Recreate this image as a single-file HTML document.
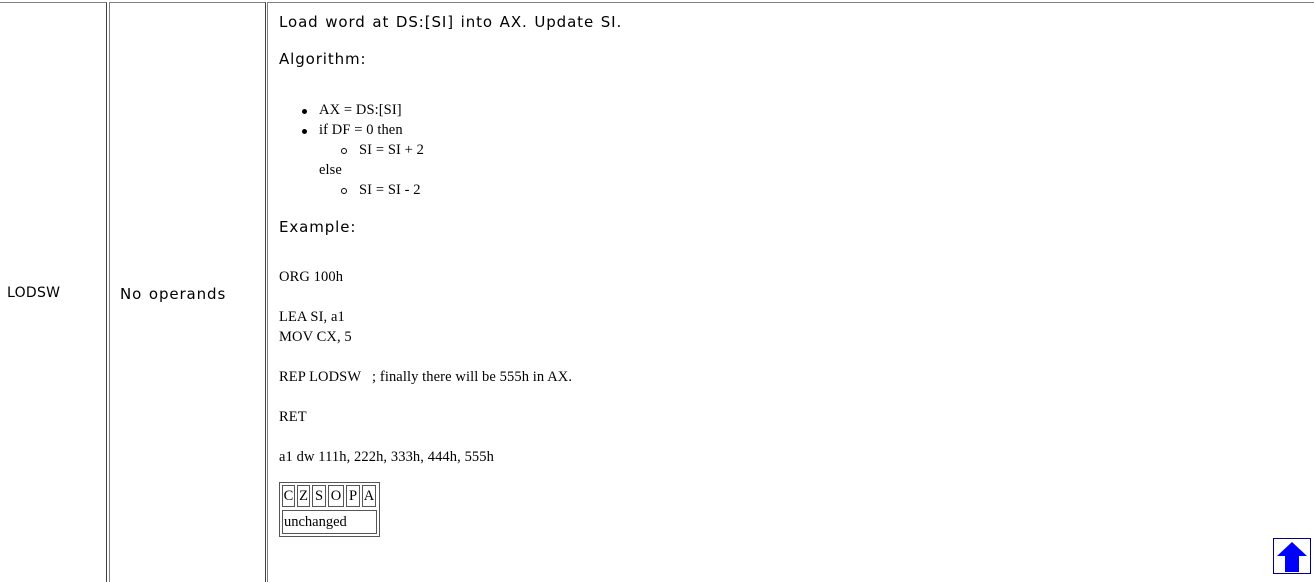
<!DOCTYPE html>
<html><head><meta charset="utf-8"><style>
body{margin:0;width:1314px;height:574px;overflow:hidden;background:#fff;position:relative;font-family:"Liberation Serif",serif;font-size:14.5px;color:#000}
.c{position:absolute;top:2px;height:580px;border-left:1px solid #808080;border-top:1px solid #808080;border-right:1px solid #404040;box-sizing:border-box}
.s{font-family:"DejaVu Sans","Liberation Sans",sans-serif;font-size:15px;position:absolute;white-space:nowrap;letter-spacing:0.9px;word-spacing:1px}
.t{position:absolute;white-space:nowrap;font-size:14.5px;letter-spacing:0.1px}
.b{position:absolute;width:5px;height:5px;border-radius:50%;background:#000}
.o{position:absolute;width:4px;height:4px;border-radius:50%;border:1px solid #000}
</style></head><body>
<div class="c" style="left:-2px;width:109px;border-left:none"></div>
<div class="c" style="left:109px;width:157px"></div>
<div class="c" style="left:267px;width:1050px;border-right:none"></div>
<div class="s" style="left:7px;top:285px;font-size:14px;letter-spacing:0.3px">LODSW</div>
<div class="s" style="left:120px;top:285px">No operands</div>
<div class="s" style="left:279px;top:13px">Load word at DS:[SI] into AX. Update SI.</div>
<div class="s" style="left:279px;top:50px">Algorithm:</div>
<div class="b" style="left:302px;top:109px"></div>
<div class="t" style="left:319px;top:102px">AX = DS:[SI]</div>
<div class="b" style="left:302px;top:129px"></div>
<div class="t" style="left:319px;top:122px">if DF = 0 then</div>
<div class="o" style="left:341px;top:148px"></div>
<div class="t" style="left:359px;top:142px">SI = SI + 2</div>
<div class="t" style="left:319px;top:162px">else</div>
<div class="o" style="left:341px;top:188px"></div>
<div class="t" style="left:359px;top:182px">SI = SI - 2</div>
<div class="s" style="left:279px;top:218px">Example:</div>
<div class="t" style="left:279px;top:269px">ORG 100h</div>
<div class="t" style="left:279px;top:309px">LEA SI, a1</div>
<div class="t" style="left:279px;top:329px">MOV CX, 5</div>
<div class="t" style="left:279px;top:369px">REP LODSW &nbsp; ; finally there will be 555h in AX.</div>
<div class="t" style="left:279px;top:409px">RET</div>
<div class="t" style="left:279px;top:449px">a1 dw 111h, 222h, 333h, 444h, 555h</div>
<div style="position:absolute;left:279px;top:482px;width:101px;height:55px;border:1px solid #555;box-sizing:border-box"></div>
<div style="position:absolute;left:282px;top:485px;display:flex;gap:2px">
<span style="border:1px solid #555;width:13px;height:22px;box-sizing:border-box;text-align:center;line-height:21px">C</span>
<span style="border:1px solid #555;width:13px;height:22px;box-sizing:border-box;text-align:center;line-height:21px">Z</span>
<span style="border:1px solid #555;width:14px;height:22px;box-sizing:border-box;text-align:center;line-height:21px">S</span>
<span style="border:1px solid #555;width:16px;height:22px;box-sizing:border-box;text-align:center;line-height:21px">O</span>
<span style="border:1px solid #555;width:14px;height:22px;box-sizing:border-box;text-align:center;line-height:21px">P</span>
<span style="border:1px solid #555;width:14px;height:22px;box-sizing:border-box;text-align:center;line-height:21px">A</span>
</div>
<div style="position:absolute;left:282px;top:510px;width:95px;height:24px;border:1px solid #555;box-sizing:border-box;line-height:22px;padding-left:1px">unchanged</div>
<svg style="position:absolute;left:1273px;top:538px" width="38" height="36" viewBox="0 0 38 36">
<rect x="0.5" y="0.5" width="37" height="35" fill="#fff" stroke="#000080"/>
<path d="M19 4 L34 18 L26 18 L26 34 L12 34 L12 18 L4 18 Z" fill="#0000ff"/>
</svg>
</body></html>
